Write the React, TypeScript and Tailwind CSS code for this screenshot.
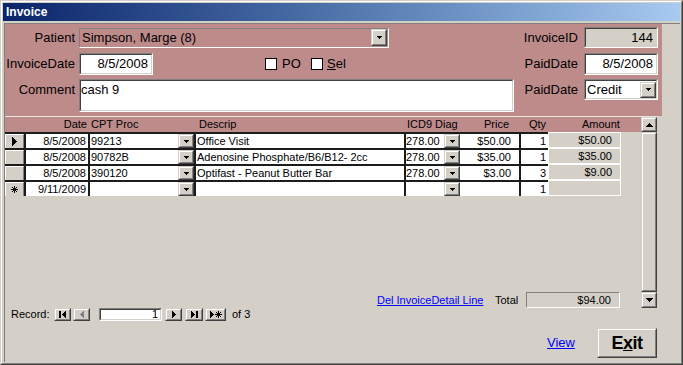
import React from "react";

function SmallDown() {
  return (
    <svg width="5" height="3" viewBox="0 0 5 3" shapeRendering="crispEdges">
      <rect x="0" y="0" width="5" height="1" fill="#000" />
      <rect x="1" y="1" width="3" height="1" fill="#000" />
      <rect x="2" y="2" width="1" height="1" fill="#000" />
    </svg>
  );
}

function ScrollArrow({ up }: { up?: boolean }) {
  return (
    <svg width="7" height="4" viewBox="0 0 7 4" shapeRendering="crispEdges">
      {up ? (
        <>
          <rect x="3" y="0" width="1" height="1" fill="#000" />
          <rect x="2" y="1" width="3" height="1" fill="#000" />
          <rect x="1" y="2" width="5" height="1" fill="#000" />
          <rect x="0" y="3" width="7" height="1" fill="#000" />
        </>
      ) : (
        <>
          <rect x="0" y="0" width="7" height="1" fill="#000" />
          <rect x="1" y="1" width="5" height="1" fill="#000" />
          <rect x="2" y="2" width="3" height="1" fill="#000" />
          <rect x="3" y="3" width="1" height="1" fill="#000" />
        </>
      )}
    </svg>
  );
}

function Raised({ className = "", children }: { className?: string; children?: React.ReactNode }) {
  return (
    <div className={"border border-t-[#d4d0c8] border-l-[#d4d0c8] border-r-[#404040] border-b-[#404040] bg-[#d4d0c8] " + className}>
      <div className="w-full h-full border border-t-white border-l-white border-r-[#808080] border-b-[#808080] flex items-center justify-center">
        {children}
      </div>
    </div>
  );
}

function Sunken({ className = "", inner = "", children }: { className?: string; inner?: string; children?: React.ReactNode }) {
  return (
    <div className={"border border-t-[#808080] border-l-[#808080] border-r-white border-b-white " + className}>
      <div className={"w-full h-full border border-t-[#404040] border-l-[#404040] border-r-[#d4d0c8] border-b-[#d4d0c8] " + inner}>
        {children}
      </div>
    </div>
  );
}

function LeftTri({ color = "#000" }: { color?: string }) {
  return (
    <svg width="4" height="7" viewBox="0 0 4 7" shapeRendering="crispEdges">
      <rect x="3" y="0" width="1" height="7" fill={color} />
      <rect x="2" y="1" width="1" height="5" fill={color} />
      <rect x="1" y="2" width="1" height="3" fill={color} />
      <rect x="0" y="3" width="1" height="1" fill={color} />
    </svg>
  );
}

function RightTri() {
  return (
    <svg width="4" height="7" viewBox="0 0 4 7" shapeRendering="crispEdges">
      <rect x="0" y="0" width="1" height="7" fill="#000" />
      <rect x="1" y="1" width="1" height="5" fill="#000" />
      <rect x="2" y="2" width="1" height="3" fill="#000" />
      <rect x="3" y="3" width="1" height="1" fill="#000" />
    </svg>
  );
}

function Bar() {
  return (
    <svg width="2" height="7" viewBox="0 0 2 7" shapeRendering="crispEdges">
      <rect x="0" y="0" width="2" height="7" fill="#000" />
    </svg>
  );
}

function Asterisk({ size = 7 }: { size?: number }) {
  const m = (size - 1) / 2;
  return (
    <svg width={size} height={size} viewBox={`0 0 ${size} ${size}`}>
      <line x1={m + 0.5} y1="0" x2={m + 0.5} y2={size} stroke="#000" strokeWidth="1" />
      <line x1="0" y1={m + 0.5} x2={size} y2={m + 0.5} stroke="#000" strokeWidth="1" />
      <line x1="1" y1="1" x2={size - 1} y2={size - 1} stroke="#000" strokeWidth="1" />
      <line x1={size - 1} y1="1" x2="1" y2={size - 1} stroke="#000" strokeWidth="1" />
    </svg>
  );
}

function SelArrow() {
  return (
    <svg width="5" height="9" viewBox="0 0 5 9" shapeRendering="crispEdges">
      <rect x="0" y="0" width="1" height="9" fill="#000" />
      <rect x="1" y="1" width="1" height="7" fill="#000" />
      <rect x="2" y="2" width="1" height="5" fill="#000" />
      <rect x="3" y="3" width="1" height="3" fill="#000" />
      <rect x="4" y="4" width="1" height="1" fill="#000" />
    </svg>
  );
}

type RowData = {
  sel: "arrow" | "none" | "new";
  date: string;
  cpt: string;
  desc: string;
  icd: string;
  price: string;
  qty: string;
  amt: string;
};

const rows: RowData[] = [
  { sel: "arrow", date: "8/5/2008", cpt: "99213", desc: "Office Visit", icd: "278.00", price: "$50.00", qty: "1", amt: "$50.00" },
  { sel: "none", date: "8/5/2008", cpt: "90782B", desc: "Adenosine Phosphate/B6/B12- 2cc", icd: "278.00", price: "$35.00", qty: "1", amt: "$35.00" },
  { sel: "none", date: "8/5/2008", cpt: "390120", desc: "Optifast - Peanut Butter Bar", icd: "278.00", price: "$3.00", qty: "3", amt: "$9.00" },
  { sel: "new", date: "9/11/2009", cpt: "", desc: "", icd: "", price: "", qty: "1", amt: "" },
];

function GridRow({ r }: { r: RowData }) {
  return (
    <div className="flex h-[16px] text-[11px] leading-[14px] whitespace-nowrap">
      <div className="w-[19px] border-t-2 border-[#1c1c1c] bg-[#d4d0c8]">
        <div className="h-full border-t border-l border-white border-r border-r-[#808080] flex items-center justify-center">
          {r.sel === "arrow" && <SelArrow />}
          {r.sel === "new" && <Asterisk size={7} />}
        </div>
      </div>
      <div className="w-[64px] border-t-2 border-l-2 border-[#1c1c1c] bg-white text-right pr-[2px]">{r.date}</div>
      <div className="w-[106px] border-t-2 border-l-2 border-[#1c1c1c] bg-white flex">
        <div className="flex-1 pl-px">{r.cpt}</div>
        <Raised className="w-[16px] h-full">
          <SmallDown />
        </Raised>
      </div>
      <div className="w-[210px] border-t-2 border-l-2 border-[#1c1c1c] bg-white pl-px">{r.desc}</div>
      <div className="w-[56px] border-t-2 border-l-2 border-[#1c1c1c] bg-white flex">
        <div className="flex-1">{r.icd}</div>
        <Raised className="w-[16px] h-full">
          <SmallDown />
        </Raised>
      </div>
      <div className="w-[59px] border-t-2 border-[#1c1c1c] bg-white text-right pr-[8px]">{r.price}</div>
      <div className="w-[29px] border-t-2 border-l-2 border-[#1c1c1c] bg-white text-right pr-[2px]">{r.qty}</div>
      <div className="w-[73px] border border-white bg-[#d4d0c8] text-right pr-[8px] leading-[14px]">{r.amt}</div>
    </div>
  );
}

function NavBtn({ className = "", children }: { className?: string; children?: React.ReactNode }) {
  return (
    <Raised className={"h-[13px] " + className}>
      <div className="flex items-center gap-px">{children}</div>
    </Raised>
  );
}

export default function App() {
  return (
    <div className="w-[683px] h-[365px] bg-[#d4d0c8] font-['Liberation_Sans',Arial,sans-serif] text-black overflow-hidden">
      <div className="w-full h-full border border-t-[#d4d0c8] border-l-[#d4d0c8] border-r-[#404040] border-b-[#404040]">
        <div className="w-full h-full border border-t-white border-l-white border-r-[#808080] border-b-[#808080] p-px flex flex-col">
          {/* Title bar */}
          <div className="h-[18px] bg-linear-to-r from-[#0a246a] to-[#a6caf0] flex items-center pl-[3px] text-white font-bold text-[12px] leading-none">
            Invoice
          </div>

          {/* Client area */}
          <div className="mt-[2px] ml-px flex-1 border-t border-l border-[#808080] flex flex-col">
            {/* Header section */}
            <div className="w-[657px] h-[92px] bg-[#be8b8b] flex flex-col pt-[3px] pr-[4px] text-[13px]">
              {/* Row 1 */}
              <div className="flex h-[21px] items-center">
                <div className="w-[70px] text-right">Patient</div>
                <div className="ml-[4px] w-[310px] h-[20px] border border-t-[#808080] border-l-[#808080] border-r-white border-b-white flex items-center">
                  <div className="flex-1 pl-[2px] whitespace-nowrap">Simpson, Marge (8)</div>
                  <Raised className="w-[16px] h-[17px] mr-px">
                    <SmallDown />
                  </Raised>
                </div>
                <div className="flex-1" />
                <div className="text-right">InvoiceID</div>
                <Sunken className="ml-[6px] w-[74px] h-[21px]" inner="bg-[#d4d0c8] flex items-center justify-end pr-[3px]">
                  144
                </Sunken>
              </div>

              {/* Row 2 */}
              <div className="flex h-[22px] items-center mt-[5px]">
                <div className="w-[70px] text-right">InvoiceDate</div>
                <Sunken className="ml-[4px] w-[74px] h-[22px]" inner="bg-white flex items-center justify-end pr-[3px]">
                  8/5/2008
                </Sunken>
                <div className="ml-[112px] w-[12px] h-[12px] bg-white border border-black" />
                <div className="ml-[5px] w-[29px]">PO</div>
                <div className="w-[12px] h-[12px] bg-white border border-black" />
                <div className="ml-[4px]">
                  <span className="underline">S</span>el
                </div>
                <div className="flex-1" />
                <div className="text-right">PaidDate</div>
                <Sunken className="ml-[6px] w-[74px] h-[22px]" inner="bg-white flex items-center justify-end pr-[3px]">
                  8/5/2008
                </Sunken>
              </div>

              {/* Row 3 */}
              <div className="flex items-start mt-[4px]">
                <div className="w-[70px] h-[21px] flex items-center justify-end">Comment</div>
                <Sunken className="ml-[4px] w-[435px] h-[33px]" inner="bg-white leading-[15px] pt-px">
                  cash 9
                </Sunken>
                <div className="flex-1" />
                <div className="h-[21px] flex items-center">PaidDate</div>
                <Sunken className="ml-[6px] w-[74px] h-[21px]" inner="bg-white flex items-center">
                  <div className="flex-1 pl-px">Credit</div>
                  <Raised className="w-[16px] h-[16px]">
                    <SmallDown />
                  </Raised>
                </Sunken>
              </div>
            </div>

            {/* Subform */}
            <div className="w-[652px] h-[192px] border-t border-[#ece8e4] flex">
              <div className="w-[636px] flex flex-col">
                <div className="flex h-[15px] bg-[#be8b8b] items-center text-[11px] whitespace-nowrap">
                  <div className="w-[19px]" />
                  <div className="w-[64px] text-right pr-px">Date</div>
                  <div className="w-[106px] pl-[3px]">CPT Proc</div>
                  <div className="w-[210px] pl-[5px]">Descrip</div>
                  <div className="w-[56px] pl-[3px]">ICD9 Diag</div>
                  <div className="w-[59px] text-right pr-[10px]">Price</div>
                  <div className="w-[29px] text-right pr-[2px]">Qty</div>
                  <div className="w-[73px] pl-[34px]">Amount</div>
                </div>
                {rows.map((r, i) => (
                  <GridRow key={i} r={r} />
                ))}
                <div className="flex-1" />
                <div className="h-[16px] flex items-center text-[11px] whitespace-nowrap">
                  <div className="w-[372px]" />
                  <div className="w-[118px] text-[#0000ff] underline">Del InvoiceDetail Line</div>
                  <div className="w-[31px]">Total</div>
                  <div className="w-[94px] h-[16px] border border-t-[#808080] border-l-[#808080] border-r-white border-b-white bg-[#d4d0c8] flex items-center justify-end pr-[8px]">
                    $94.00
                  </div>
                </div>
              </div>
              {/* Scrollbar */}
              <div className="w-[16px] flex flex-col">
                <Raised className="w-[16px] h-[15px]">
                  <ScrollArrow up />
                </Raised>
                <Raised className="w-[16px] flex-1" />
                <Raised className="w-[16px] h-[16px]">
                  <ScrollArrow />
                </Raised>
              </div>
            </div>

            {/* Record navigation */}
            <div className="h-[13px] flex items-center pl-[6px] text-[11px] whitespace-nowrap">
              <div className="w-[43px]">Record:</div>
              <NavBtn className="w-[17px]">
                <Bar />
                <LeftTri />
              </NavBtn>
              <NavBtn className="ml-[2px] w-[17px]">
                <LeftTri color="#808080" />
              </NavBtn>
              <Sunken className="ml-[9px] w-[63px] h-[13px]" inner="bg-white flex items-center justify-end pr-[2px] leading-none">
                1
              </Sunken>
              <NavBtn className="ml-[3px] w-[17px]">
                <RightTri />
              </NavBtn>
              <NavBtn className="ml-[3px] w-[18px]">
                <RightTri />
                <Bar />
              </NavBtn>
              <NavBtn className="ml-[2px] w-[21px]">
                <RightTri />
                <Asterisk size={7} />
              </NavBtn>
              <div className="ml-[6px]">of 3</div>
            </div>

            {/* Bottom buttons */}
            <div className="mt-[7px] h-[30px] flex items-center">
              <div className="ml-[542px] w-[50px] text-[13px] text-[#0000ff] underline">View</div>
              <Raised className="w-[60px] h-[30px]">
                <span className="text-[18px] font-bold tracking-[-0.5px] leading-none">
                  E<span className="underline">x</span>it
                </span>
              </Raised>
            </div>
          </div>
        </div>
      </div>
    </div>
  );
}
